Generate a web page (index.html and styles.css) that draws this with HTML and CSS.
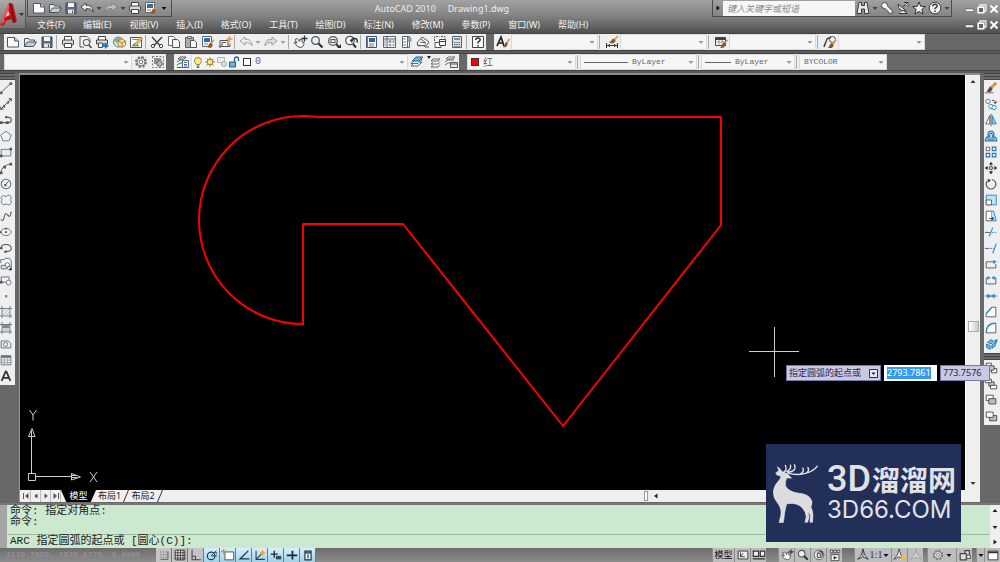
FILE: index.html
```html
<!DOCTYPE html>
<html lang="zh-CN">
<head>
<meta charset="utf-8">
<title>AutoCAD 2010 Drawing1.dwg</title>
<link rel="stylesheet" href="styles.css">
</head>
<body>
<svg class="sprite" aria-hidden="true">
  <symbol id="new" viewBox="0 0 16 16"><path d="M2.5 3.500h7l4 3.500v6h-11z" fill="#fbfbfb" stroke="#4c5664"/><path d="M9.500 3.500v3.500h4" fill="#c9d0d8" stroke="#4c5664"/></symbol>
  <symbol id="open" viewBox="0 0 16 16"><path d="M2.500 12.500v-8h4l1 1.500h5v2" fill="#e8ebee" stroke="#4c5664"/><path d="M2.500 12.500l3-4.500h9l-3 4.500z" fill="#c3ccd6" stroke="#4c5664"/></symbol>
  <symbol id="save" viewBox="0 0 16 16"><path d="M3 3h10v10.500h-10z" fill="#5c6a7e" stroke="#3f4a5a"/><path d="M5 3h6v4h-6z" fill="#f4f6f8"/><path d="M5 9.500h6v4h-6z" fill="#dfe4ea"/><path d="M9 10.500h1v2.500h-1z" fill="#3f4a5a"/></symbol>
  <symbol id="print" viewBox="0 0 16 16"><path d="M4.500 6v-3.500h7v3.500" fill="#fff" stroke="#444"/><rect x="2.500" y="6" width="11" height="5" rx="1" fill="#d6dadf" stroke="#444"/><path d="M4.500 9.500h7v4h-7z" fill="#fff" stroke="#444"/></symbol>
  <symbol id="preview" viewBox="0 0 16 16"><path d="M3 2.500h7l3 3v3M3 2.500v10.500h4" fill="#fff" stroke="#555"/><circle cx="9.500" cy="8.500" r="3.200" fill="#e8f1f8" stroke="#444"/><path d="M11.800 11l2.700 3" stroke="#444" stroke-width="1.600"/></symbol>
  <symbol id="publish" viewBox="0 0 16 16"><path d="M4.500 6v-3.500h7v3.500" fill="#fff" stroke="#444"/><path d="M2.500 6h11v4h-11z" fill="#d6dadf" stroke="#444"/><path d="M4.500 9h4v4.500h-4z" fill="#fff" stroke="#444"/><path d="M8 10.500h3v-2l4 3.300-4 3.200v-2h-3z" fill="#1976c0"/></symbol>
  <symbol id="dwf" viewBox="0 0 16 16"><circle cx="7.500" cy="8" r="5" fill="#dcece6" stroke="#5d7a78"/><path d="M3 6l4-3 3 1-2 3-3 2z" fill="#7db395"/><path d="M7 7l4-2 3.500 2v4l-3.500 2.500-4-2z" fill="#f6dda1" stroke="#b18738"/><path d="M7 7l4 2 3.500-2M11 9v4" fill="none" stroke="#b18738"/></symbol>
  <symbol id="markup" viewBox="0 0 16 16"><path d="M2.500 3.500h11v10h-11z" fill="#fff" stroke="#555"/><path d="M4 5.500h8M4 12l3-3 2 1 2 2z" fill="#70a783" stroke="#70a783"/><path d="M6 11l6.500-8 2 1.500-6.500 7.500z" fill="#f5c154" stroke="#99712a" stroke-width=".7"/></symbol>
  <symbol id="cut" viewBox="0 0 16 16"><path d="M3 3l8 8.500M13 3l-8 8.500" stroke="#444" stroke-width="1.400"/><circle cx="4" cy="12" r="1.700" fill="none" stroke="#444"/><circle cx="12" cy="12" r="1.700" fill="none" stroke="#444"/></symbol>
  <symbol id="copydoc" viewBox="0 0 16 16"><path d="M2.500 2.500h5l2 2v7h-7z" fill="#fff" stroke="#666"/><path d="M6.500 5.500h5l2 2v6h-7z" fill="#f4f6f8" stroke="#555"/></symbol>
  <symbol id="paste" viewBox="0 0 16 16"><path d="M2.500 3.500h8v10h-8z" fill="#a7adb5" stroke="#666"/><path d="M4.500 2.500h4v2h-4z" fill="#ddd" stroke="#666"/><path d="M7.500 6.500h4l2 2v5h-6z" fill="#fff" stroke="#555"/></symbol>
  <symbol id="match" viewBox="0 0 16 16"><path d="M2.500 2.500h9v10h-9z" fill="#fff" stroke="#52647c"/><path d="M4 4h6v4h-6z" fill="#366b9f"/><path d="M4 10h4" stroke="#777"/><path d="M14 6l-4 4" stroke="#c59a5c" stroke-width="1.600"/><path d="M10.500 8.500l2.500 2.500-2 3q-2 0-4-1z" fill="#9a5b29"/></symbol>
  <symbol id="blockedit" viewBox="0 0 16 16"><path d="M3 6.500h8v6h-8zM5 12.500v-4h4" fill="#f5f5f5" stroke="#555"/><circle cx="3" cy="12.500" r="1.300" fill="#777"/><path d="M12.500 2v6M9.500 5h6" stroke="#f29a24" stroke-width="1.500"/><path d="M8 12.500h5v-3" fill="none" stroke="#555"/></symbol>
  <symbol id="undo" viewBox="0 0 16 16"><path d="M2 7l5-4v2.500c4-.5 7 1 7 6.500-1.500-3-3-3.500-7-3.300v2.500z" fill="#eee" stroke="currentColor"/></symbol>
  <symbol id="redo" viewBox="0 0 16 16"><path d="M14 7l-5-4v2.500c-4-.5-7 1-7 6.500 1.500-3 3-3.500 7-3.300v2.500z" fill="#ddd" stroke="currentColor"/></symbol>
  <symbol id="pan" viewBox="0 0 16 16"><path d="M2 8l3 1-2-3.500 2-1 2.500 3L8 5l2 .5V8l2 .5q0 5-4 5Q5 13.500 2 8z" fill="#f6f6f6" stroke="#555"/><path d="M12.500 1.500v6M9.500 4.500h6" stroke="#333" stroke-width="1.300"/></symbol>
  <symbol id="zoom" viewBox="0 0 16 16"><circle cx="6.500" cy="6.500" r="3.800" fill="#eaf1f6" stroke="#4c5560" stroke-width="1.300"/><path d="M9.500 9.500l4 4" stroke="#333" stroke-width="2.300"/></symbol>
  <symbol id="zoomwin" viewBox="0 0 16 16"><circle cx="7" cy="7" r="4.300" fill="#eaf1f6" stroke="#4c5560" stroke-width="1.300"/><rect x="5" y="5.500" width="4" height="3" fill="none" stroke="#555"/><path d="M10 10l3 3" stroke="#333" stroke-width="2"/><path d="M11 14h4v-4z" fill="#333"/></symbol>
  <symbol id="zoomprev" viewBox="0 0 16 16"><circle cx="7" cy="6.500" r="4.200" fill="#fff" stroke="#4c5560" stroke-width="1.300"/><path d="M8 7q1-3 4-2.500t2 4" stroke="#333" stroke-width="1.500" fill="none"/><path d="M6.500 6l4-1-1.500 4z" fill="#333"/><path d="M10 10l3 3.500" stroke="#333" stroke-width="2"/></symbol>
  <symbol id="props" viewBox="0 0 16 16"><path d="M2.500 2.500h10v11h-10z" fill="#f9fbfd" stroke="#425672"/><path d="M5 4h6v4h-6z" fill="#30669d"/><path d="M5 10h5M5 12h5M3.500 3v10" stroke="#6d7d92"/></symbol>
  <symbol id="dcenter" viewBox="0 0 16 16"><path d="M2.500 2.500h12v11h-12zM6 2.500v11M2.500 5h12" fill="#f4f5f7" stroke="#5b6672"/><path d="M8 6.500h2v2h-2zM12 6.500h1v2h-1zM8 10.500h2v1h-2zM12 10.500h1v1h-1zM3 7h2M3 9h2M3 11h2" fill="#8fa0b3" stroke="#8fa0b3"/></symbol>
  <symbol id="toolpal" viewBox="0 0 16 16"><path d="M4.500 2.500h7v11h-7zM9.500 2.500v11" fill="#fff" stroke="#5b6672"/><path d="M10 4h3v3h-3zM5 5h3M5 8h3M5 11h3" fill="#aeb6c0" stroke="#7b8591"/></symbol>
  <symbol id="sheets" viewBox="0 0 16 16"><path d="M2 9l5-6 7 5-2 3-9 1z" fill="#fff" stroke="#555"/><path d="M2 10c3 3 6 0 8 3h4M5 8l6 1M6 5l5 4" fill="none" stroke="#555"/></symbol>
  <symbol id="msm" viewBox="0 0 16 16"><path d="M2.500 7v-4.500h5M9 2.500h4v5" fill="none" stroke="#555" stroke-dasharray="2 1"/><path d="M3 8.500h6v5h-6z" fill="#fff" stroke="#555"/><path d="M7.500 5.500h6v6h-6zM7.500 7.500h6" fill="#f4f4f4" stroke="#444"/></symbol>
  <symbol id="calc" viewBox="0 0 16 16"><path d="M3.500 2.500h9v11h-9z" fill="#dfe3e8" stroke="#56606c"/><path d="M5 4h6v2h-6z" fill="#7891a9"/><path d="M5 8.500h6M5 10.500h6M5 12.300h6" stroke="#56606c" stroke-dasharray="1.500 .8"/></symbol>
  <symbol id="help" viewBox="0 0 16 16"><path d="M2.500 2.500h11v11h-11z" fill="#fafafa" stroke="#444"/><path d="M5.800 6q0-2 2.200-2t2.200 1.800q0 1.200-2.200 2.500v1.200M8 11v1.500" fill="none" stroke="#333" stroke-width="1.500"/></symbol>
  <symbol id="tstyle" viewBox="0 0 16 16"><path d="M2 12l4-9 3 9M3.500 9h4" fill="none" stroke="#222" stroke-width="1.700"/><path d="M14.500 5l-3 4" stroke="#c99a59" stroke-width="1.600"/><path d="M11 8l2 2-2 3-3 .5z" fill="#8d5528"/></symbol>
  <symbol id="dstyle" viewBox="0 0 16 16"><path d="M2.500 9v5M13.500 9v5M3 11.500h10" fill="none" stroke="#333"/><path d="M3 11.500l3-1.500v3zM13 11.500l-3-1.500v3z" fill="#333"/><path d="M14 2l-4 4" stroke="#c99a59" stroke-width="1.700"/><path d="M9 4.500l3 2.500-3 2.500-4-.5z" fill="#8d5528"/></symbol>
  <symbol id="tbstyle" viewBox="0 0 16 16"><path d="M2.500 3.500h10v8h-10z" fill="#fff" stroke="#444"/><path d="M2.500 5h10" stroke="#444" stroke-width="2"/><path d="M2.500 8h10M6 6v5.500M9 6v5.500" stroke="#999"/><path d="M14.500 6l-3 3" stroke="#c99a59" stroke-width="1.600"/><path d="M11 8l2 2-2 3.500-4 .5z" fill="#8d5528"/></symbol>
  <symbol id="mlstyle" viewBox="0 0 16 16"><path d="M2 13l3-8 4-2M2 13l1-3.500" fill="none" stroke="#444" stroke-width="1.400"/><circle cx="10.500" cy="5.500" r="3" fill="none" stroke="#555"/><path d="M14 6l-4 5" stroke="#c99a59" stroke-width="1.600"/><path d="M9 9l3 2-2 3H6z" fill="#8d5528"/></symbol>
  <symbol id="gear" viewBox="0 0 16 16"><circle cx="8" cy="8" r="5" fill="none" stroke="#777" stroke-width="2" stroke-dasharray="2.300 1.600"/><circle cx="8" cy="8" r="4" fill="#e7e7e7" stroke="#777"/><circle cx="8" cy="8" r="1.700" fill="#fff" stroke="#777"/></symbol>
  <symbol id="wsave" viewBox="0 0 16 16"><path d="M2.500 2.500h11v11h-11z" fill="none" stroke="#777" stroke-dasharray="2 1.500"/><path d="M4 4h7v6h-7z" fill="#8a919a"/><circle cx="9.500" cy="9.500" r="2.800" fill="#aeb6bf" stroke="#5c6674"/></symbol>
  <symbol id="layers" viewBox="0 0 16 16"><path d="M3 5l2-2h6l-2 2zM2 8l3-2h3M2 11l3-2h2M2 13.500h6" fill="#fff" stroke="#555"/><path d="M7.500 6.500h6v7h-6z" fill="#fff" stroke="#486a91"/><path d="M9 8.500h3M9 10.500h3M9 12h3" stroke="#486a91"/></symbol>
  <symbol id="bulb" viewBox="0 0 12 16"><path d="M4.500 10.500q-2-2-2-4 0-3 3.500-3t3.500 3q0 2-2 4z" fill="#ffe884" stroke="#978439"/><path d="M4.500 12h3M4.800 13.500h2.400" stroke="#555"/></symbol>
  <symbol id="sun" viewBox="0 0 12 16"><path d="M6 3v10M1 8h10M2.500 4.500l7 7M9.500 4.500l-7 7" stroke="#9b8030"/><circle cx="6" cy="8" r="2.800" fill="#ffe788" stroke="#9b8030"/></symbol>
  <symbol id="vpfreeze" viewBox="0 0 12 16"><path d="M1.500 3.500h7v5h-7z" fill="#eee" stroke="#b5b5b5"/><circle cx="8" cy="10" r="2.500" fill="#e2e2e2" stroke="#aaa"/></symbol>
  <symbol id="unlock" viewBox="0 0 12 16"><path d="M6.500 8V5q0-2 2-2t2 2v2" fill="none" stroke="#2c6183" stroke-width="1.300"/><path d="M1.500 8h6v5h-6z" fill="#68b6df" stroke="#205f86"/></symbol>
  <symbol id="mklayer" viewBox="0 0 16 16"><path d="M2 12l4-4h7l-4 4z" fill="#fff" stroke="#54616d"/><path d="M2 9.500l4-4h7l-4 4z" fill="#dff0fa" stroke="#47779b"/><path d="M3 7l4-4h7l-4 4z" fill="#6cb3df" stroke="#2f688f"/></symbol>
  <symbol id="lprev" viewBox="0 0 16 16"><path d="M5 7l2-2h7l-2 2zM5 10l2-1.500M14 7.500l-2 2.500H5M5 13l2-1.500M14 10.500l-2 2.500H5" fill="#fff" stroke="#666"/><path d="M1 2l4 0-2 3z" fill="#222"/></symbol>
  <symbol id="lstate" viewBox="0 0 16 16"><path d="M3 5l2-2h7l-2 2zM2 8l3-2h6M2 11l3-2h2" fill="#fff" stroke="#666"/><path d="M7.500 8.500h7v5h-7z" fill="#e9edf1" stroke="#555"/><path d="M7.500 10h7" stroke="#555"/></symbol>

  <symbol id="line" viewBox="0 0 16 16"><path d="M2.500 13L13 3" stroke="#555"/><path d="M1 12h3v3H1zM12 1.500h3v3h-3z" fill="#5e6266"/></symbol>
  <symbol id="xline" viewBox="0 0 16 16"><path d="M2 14L14 2M11 2h3v3M2 11v3h3" fill="none" stroke="#333"/><path d="M4.500 9.500h2.500v2.500H4.500zM9 5h2.500v2.500H9z" fill="#555"/></symbol>
  <symbol id="pline" viewBox="0 0 16 16"><path d="M3 11h8q3 0 3-3t-3-3H8" fill="none" stroke="#596069" stroke-width="1.300"/><path d="M1 9.500h3v3H1zM8 9.500h3v3H8zM7 3.500h2.500V6H7z" fill="#555"/></symbol>
  <symbol id="polygon" viewBox="0 0 16 16"><path d="M8 2.500l6 4.500-2.500 6.500h-7L2 7z" fill="#eef2f6" stroke="#65717f"/></symbol>
  <symbol id="rect" viewBox="0 0 16 16"><path d="M2.500 5h11v7.500h-11z" fill="#e9eef3" stroke="#65717f"/><path d="M1 11h3v3H1zM12 3h3v3h-3z" fill="#555"/></symbol>
  <symbol id="arc" viewBox="0 0 16 16"><path d="M2.500 13q0-8 11-9.500" fill="none" stroke="#555"/><path d="M1 12h3v3H1zM12 2h3v3h-3zM5 5.500h3v3H5z" fill="#555"/></symbol>
  <symbol id="circle" viewBox="0 0 16 16"><circle cx="8" cy="8" r="5.500" fill="#eef2f6" stroke="#65717f" stroke-width="1.200"/><path d="M7 9l4-4" stroke="#444"/><path d="M6 8h2.500v2.500H6z" fill="#555"/></symbol>
  <symbol id="revcloud" viewBox="0 0 16 16"><path d="M8 4q4-3 5.500 0t-1 4q3 1 1 4t-5 .5Q5 15 3 12t1-4Q1 6 3 4t5 0z" fill="#eef2f6" stroke="#65717f"/></symbol>
  <symbol id="spline" viewBox="0 0 16 16"><path d="M2 12q3 3 4-3t4-2 4-4" fill="none" stroke="#555" stroke-width="1.200"/></symbol>
  <symbol id="ellipse" viewBox="0 0 16 16"><ellipse cx="8" cy="8" rx="6" ry="4" fill="#eef2f6" stroke="#65717f"/><path d="M7 7h2v2H7zM7 3h2v2H7zM1 7h2v2H1z" fill="#555"/></symbol>
  <symbol id="earc" viewBox="0 0 16 16"><path d="M2.500 8q0-4 5.500-4t6 4-6 4" fill="none" stroke="#555" stroke-width="1.200"/><path d="M1 7h3v2.500H1zM6 11h3v2.500H6z" fill="#555"/></symbol>
  <symbol id="insert" viewBox="0 0 16 16"><path d="M2 7V3h4l1-1.500h5l2 3V11H8" fill="#f2f4f6" stroke="#596675"/><path d="M2.500 9.500h7v4h-7z" fill="#dce2e9" stroke="#596675"/><circle cx="9.500" cy="9" r="2.500" fill="#fff" stroke="#596675"/><path d="M14.500 15v-4l-4 4z" fill="#222"/></symbol>
  <symbol id="block" viewBox="0 0 16 16"><path d="M2.500 4.500h9v6h-9z" fill="#eef2f6" stroke="#596675"/><circle cx="11" cy="11" r="2.700" fill="#fff" stroke="#596675"/><path d="M1 9h3v3H1z" fill="#555"/></symbol>
  <symbol id="point" viewBox="0 0 16 16"><path d="M7 7h2.500v2.500H7z" fill="#777"/></symbol>
  <symbol id="hatch" viewBox="0 0 16 16"><path d="M3.500 1v14M12.500 1v14M1 4h14M1 12.500h14" stroke="#65717f"/><path d="M4 8l4-4M4 12l8-8M8 12l4-4" stroke="#a6adb5"/></symbol>
  <symbol id="gradient" viewBox="0 0 16 16"><path d="M4 4h8v4H4z" fill="#7f8b97"/><path d="M4 8h8v4H4z" fill="#cbd1d7"/><path d="M3.500 1v14M12.500 1v14M1 4h14M1 12.500h14" stroke="#65717f"/></symbol>
  <symbol id="region" viewBox="0 0 16 16"><path d="M2.500 12.500v-8h8l3 3v5z" fill="#e9edf1" stroke="#596675"/><circle cx="7.500" cy="8.500" r="2.300" fill="#fff" stroke="#596675"/></symbol>
  <symbol id="table" viewBox="0 0 16 16"><path d="M2.500 3h11v10.500h-11z" fill="#fff" stroke="#596675"/><path d="M2.500 4.500h11" stroke="#596675" stroke-width="2"/><path d="M2.500 8h11M2.500 11h11M6 4v9M10 4v9" stroke="#8b939c"/></symbol>
  <symbol id="mtext" viewBox="0 0 16 16"><path d="M3 13.500L7.500 3h1L13 13.500M5 10h6" fill="none" stroke="#333" stroke-width="2"/></symbol>

  <symbol id="erase" viewBox="0 0 16 16"><path d="M14 2L8 8" stroke="#c29a60" stroke-width="3.500"/><path d="M7 6l3 3-3 4-4-1z" fill="#5f4a3c"/><path d="M1 13.500h10" stroke="#666"/></symbol>
  <symbol id="copy" viewBox="0 0 16 16"><circle cx="4.500" cy="5" r="2.500" fill="#fff" stroke="#5b6875"/><circle cx="8" cy="11" r="2.500" fill="#fff" stroke="#2585c6"/><circle cx="11.500" cy="12" r="2.500" fill="#e4f4fd" stroke="#2585c6"/><path d="M9 4q4-1 4 3M11 6l2 1.500L14.500 5" fill="none" stroke="#333"/></symbol>
  <symbol id="mirror" viewBox="0 0 16 16"><path d="M6.500 3v9.500H2z" fill="#fff" stroke="#56616c"/><path d="M9.500 3v9.500H14z" fill="#9bd2f3" stroke="#2479b6"/><path d="M8 1v14" stroke="#444"/></symbol>
  <symbol id="offset" viewBox="0 0 16 16"><path d="M1.500 13.500q0-4.500 3.500-4.500-1.500-6.500 3-6.500t3 6.500q3.500 0 3.500 4.500z" fill="#a9d8f4" stroke="#2579b2" stroke-width="1.400"/><path d="M4 11.500h8M6.500 10q-1.500-5 1.500-5t1.500 5" fill="none" stroke="#365a77"/></symbol>
  <symbol id="array" viewBox="0 0 16 16"><path d="M2.500 2.500h4v4h-4z" fill="#fff" stroke="#555"/><path d="M9.500 2.500h4v4h-4zM2.500 9.500h4v4h-4zM9.500 9.500h4v4h-4z" fill="#e4f4fd" stroke="#2479b6" stroke-width="1.300"/></symbol>
  <symbol id="move" viewBox="0 0 16 16"><path d="M8 2v3M8 11v3M2 8h3M11 8h3" stroke="#333" stroke-width="1.300"/><path d="M8 1l2.500 3h-5zM8 15l2.500-3h-5zM1 8l3-2.500v5zM15 8l-3-2.500v5z" fill="#333"/><path d="M6.500 6.500h3v3h-3z" fill="#fff" stroke="#333"/></symbol>
  <symbol id="rotate" viewBox="0 0 16 16"><path d="M4 4.500a5.500 5.500 0 1 0 5-1.700" fill="none" stroke="#555" stroke-width="1.300"/><path d="M4 2l4 1.500-3 3z" fill="#444"/></symbol>
  <symbol id="scale" viewBox="0 0 16 16"><path d="M2.500 2.500h11.500v11H2.500z" fill="#c0e4f9" stroke="#277fb9"/><path d="M2.500 8h6v5.500h-6z" fill="#fff" stroke="#555"/></symbol>
  <symbol id="stretch" viewBox="0 0 16 16"><path d="M2.500 2.500H9v11H2.500z" fill="#fff" stroke="#555"/><path d="M9 2.500h2l3 11H9" fill="#c0e4f9" stroke="#277fb9"/><path d="M6 11h5M9 9l2 2-2 2" stroke="#222" fill="none"/></symbol>
  <symbol id="trim" viewBox="0 0 16 16"><path d="M1 8.500h6" stroke="#555"/><path d="M9 8.500h6" stroke="#2789ca" stroke-dasharray="2 1"/><path d="M6 13L10 3" stroke="#2789ca" stroke-width="1.300"/></symbol>
  <symbol id="extend" viewBox="0 0 16 16"><path d="M1 8.500h5" stroke="#555"/><path d="M7 8.500h4" stroke="#2789ca" stroke-dasharray="2 1"/><path d="M10 14l4-11" stroke="#2789ca" stroke-width="1.300"/></symbol>
  <symbol id="breakpt" viewBox="0 0 16 16"><path d="M13.500 8v4.500h-11v-7h8" fill="none" stroke="#555"/><path d="M10.500 3l4 2.500-4 2.500z" fill="#2789ca"/></symbol>
  <symbol id="break" viewBox="0 0 16 16"><path d="M4 5.500H2.500v7h11v-7H12" fill="none" stroke="#555"/><path d="M4 3l3.500 2.500L4 8zM12 3L8.500 5.500 12 8z" fill="#2789ca"/></symbol>
  <symbol id="join" viewBox="0 0 16 16"><path d="M1 8h14" stroke="#555"/><path d="M4 5l4 3-4 3zM12 5L8 8l4 3z" fill="#2789ca"/></symbol>
  <symbol id="chamfer" viewBox="0 0 16 16"><path d="M13.500 2.500v11h-11V10L9 2.500z" fill="#fff" stroke="#555"/><path d="M2.500 10L9 2.500" stroke="#2789ca" stroke-width="1.400"/></symbol>
  <symbol id="fillet" viewBox="0 0 16 16"><path d="M13.500 2.500v11h-11q0-10 11-11z" fill="#fff" stroke="#555"/><path d="M2.500 13q0-10.500 10.500-10.500" fill="none" stroke="#2789ca" stroke-width="1.300"/></symbol>
  <symbol id="explode" viewBox="0 0 16 16"><path d="M4 6l4-3 3 2-3 3zM3 8l4 2v4l-4-2zM9 9l4-3v4l-4 3zM12 4l3-1-1 4z" fill="#6fbceb" stroke="#1c6da8"/></symbol>
  <symbol id="front" viewBox="0 0 16 16"><path d="M2.500 2.500h6v5h-6zM8.500 8.500h6v5h-6z" fill="#fff" stroke="#444"/><path d="M5.500 5.500h6v5h-6z" fill="#bfc7cf" stroke="#444"/></symbol>
  <symbol id="back" viewBox="0 0 16 16"><path d="M5.500 5.500h6v5h-6z" fill="#bfc7cf" stroke="#444"/><path d="M1.500 2.500h7v4h-7zM7.500 9.500h7v4h-7z" fill="#fff" stroke="#444"/></symbol>
  <symbol id="above" viewBox="0 0 16 16"><path d="M2.500 2.500h8v6h-8z" fill="#fff" stroke="#444"/><path d="M5.500 6.500h8v6h-8z" fill="#b5bdc5" stroke="#444"/></symbol>
  <symbol id="under" viewBox="0 0 16 16"><path d="M6.500 7.500h8v6h-8z" fill="#b5bdc5" stroke="#444"/><path d="M2.500 3.500h8v6h-8z" fill="#fff" stroke="#444"/></symbol>

  <symbol id="binoc" viewBox="0 0 16 16"><path d="M4 2.500h2.500v3h3v-3H12L14 13.500H9.500V9h-3v4.500H2z" fill="#e7eaee" stroke="#353c46"/></symbol>
  <symbol id="key" viewBox="0 0 16 16"><path d="M7 7l6 6" stroke="#444" stroke-width="4"/><circle cx="5.500" cy="5.500" r="3" fill="#f4f4f4" stroke="#444"/><path d="M6 6l6.500 6.500" stroke="#f4f4f4" stroke-width="2.600"/></symbol>
  <symbol id="dish" viewBox="0 0 16 16"><path d="M3 4q0 7 8 7zM4 13.500h8L9 10.500M8 7l4-4M9 2.500h4v4" fill="#f4f4f4" stroke="#333"/></symbol>
  <symbol id="star" viewBox="0 0 16 16"><path d="M8 2l1.700 4.300 4.600.3-3.500 2.900 1.200 4.500-4-2.500L4 14l1.200-4.500L1.700 6.600l4.600-.3z" fill="#eee" stroke="#333"/></symbol>
  <symbol id="qmark" viewBox="0 0 16 16"><circle cx="8" cy="8" r="5.800" fill="#eee" stroke="#444"/><path d="M5.800 6.300q0-2 2.200-2t2.200 1.800q0 1.200-2.200 2.200v1M8 10.500v1.500" fill="none" stroke="#333" stroke-width="1.400"/></symbol>
  <symbol id="min" viewBox="0 0 12 12"><path d="M1.500 6h8v2.500h-8z" fill="#fff" stroke="#444" stroke-width=".5"/></symbol>
  <symbol id="restore" viewBox="0 0 12 12"><path d="M4 2h6v6H4z" fill="none" stroke="#eee" stroke-width="1.300"/><path d="M2.200 4.200h5.600v5.600H2.200z" fill="#666" stroke="#fff" stroke-width="1.500"/></symbol>
  <symbol id="close" viewBox="0 0 12 12"><path d="M2.500 2.500l7 7M9.500 2.500l-7 7" stroke="#fff" stroke-width="2"/></symbol>
  <symbol id="down" viewBox="0 0 8 8"><path d="M1.500 3h5L4 6z" fill="currentColor"/></symbol>
  <symbol id="up" viewBox="0 0 8 8"><path d="M1.500 5h5L4 2z" fill="currentColor"/></symbol>
  <symbol id="left" viewBox="0 0 8 8"><path d="M5.500 1.500v5L2 4z" fill="currentColor"/></symbol>
  <symbol id="right" viewBox="0 0 8 8"><path d="M2.500 1.500v5L6 4z" fill="currentColor"/></symbol>
  <symbol id="first" viewBox="0 0 8 8"><path d="M6.500 1v6L3 4z" fill="currentColor"/><path d="M1.500 1v6" stroke="currentColor"/></symbol>
  <symbol id="last" viewBox="0 0 8 8"><path d="M1.500 1v6L5 4z" fill="currentColor"/><path d="M6.500 1v6" stroke="currentColor"/></symbol>

  <symbol id="snap" viewBox="0 0 16 16"><path d="M4 4.500h8M4 7.500h8M4 10.500h8" stroke="#444" stroke-dasharray="1 2"/><path d="M12.500 4v9H4" fill="none" stroke="#555"/></symbol>
  <symbol id="grid" viewBox="0 0 16 16"><path d="M2.500 2.500h11v11h-11zM5.500 2v12M8.500 2v12M11.500 2v12M2 5.500h12M2 8.500h12M2 11.500h12" fill="#eee" stroke="#333"/></symbol>
  <symbol id="ortho" viewBox="0 0 16 16"><path d="M3.500 2v11.500H14M3.500 9.500h4v4" fill="none" stroke="#444" stroke-width="1.200"/></symbol>
  <symbol id="polar" viewBox="0 0 16 16"><circle cx="7" cy="9" r="4.300" fill="none" stroke="#1f3c4b" stroke-width="1.300"/><path d="M7 9l6-6M7 9h7M11 5l2 0v2" fill="none" stroke="#1f3c4b"/></symbol>
  <symbol id="osnap" viewBox="0 0 16 16"><path d="M4.500 4.500h10v9h-10z" fill="#fff" stroke="#444"/><path d="M3 1v6M0 4h6" stroke="#e48a20" stroke-width="1.500"/></symbol>
  <symbol id="otrack" viewBox="0 0 16 16"><path d="M13 3L3.500 12.500H14" fill="none" stroke="#233b48" stroke-width="1.500"/></symbol>
  <symbol id="ducs" viewBox="0 0 16 16"><path d="M3.500 3v10h10M3.500 13l6-6" fill="none" stroke="#234357" stroke-width="1.200"/><path d="M11 1l1.200 3.300L15 5.500l-2.800 1.200L11 10 9.800 6.700 7 5.500l2.800-1.200z" fill="#f5a437"/></symbol>
  <symbol id="dyn" viewBox="0 0 16 16"><path d="M6 3v8M2 7h8" stroke="#222" stroke-width="1.500"/><path d="M8 9h6v4H8z" fill="#334c59"/></symbol>
  <symbol id="lwt" viewBox="0 0 16 16"><path d="M2 8.500h12M8.500 3v10" stroke="#18252d" stroke-width="2"/></symbol>
  <symbol id="qp" viewBox="0 0 16 16"><path d="M4.500 3.500h7v10h-7zM4.500 5.500h7" fill="#eff9ff" stroke="#1c2d38" stroke-width="1.300"/><path d="M7 7h2v5H7z" fill="#617c8d"/></symbol>
  <symbol id="qvlay" viewBox="0 0 16 16"><path d="M2.500 3.500h11v9h-11z" fill="#eee" stroke="#333"/><path d="M5 5v5h5M5 10l3-4" fill="none" stroke="#333"/></symbol>
  <symbol id="qvdraw" viewBox="0 0 16 16"><path d="M1.500 3.500h6v6h-6zM9.500 3.500h5v6h-5zM1 12.500h14" fill="#eee" stroke="#333" stroke-width="1.300"/></symbol>
  <symbol id="wheel" viewBox="0 0 16 16"><circle cx="8" cy="8" r="5.500" fill="#eee" stroke="#555"/><path d="M6 6l2-2h4v5l-2 2H6zM6 6h4v5M10 6l2-2" fill="#ccd" stroke="#444"/></symbol>
  <symbol id="motion" viewBox="0 0 16 16"><path d="M2.500 2.500h3v3h-3zM6.500 2.500h3v3h-3zM10.500 2.500h3v3h-3zM3.500 7.500h9v7h-9z" fill="#eee" stroke="#444"/><path d="M6.500 9v4l4-2z" fill="#333"/></symbol>
  <symbol id="anno" viewBox="0 0 16 16"><path d="M8 1l2 7 4 5-6-3-6 3 4-5z" fill="#eee" stroke="currentColor"/><path d="M8 2v8" stroke="currentColor"/></symbol>
  <symbol id="annostar" viewBox="0 0 16 16"><path d="M7 1l2 7 4 5-6-3-6 3 4-5z" fill="#eee" stroke="#444"/><circle cx="12" cy="11" r="2.500" fill="#f8bd52"/></symbol>
  <symbol id="tlock" viewBox="0 0 16 16"><path d="M2.500 6.500h7v7h-7zM8 6V3h5v5" fill="#ddd" stroke="#444" stroke-width="1.300"/><path d="M10 8h4v4h-4z" fill="#eee" stroke="#444"/></symbol>
  <symbol id="clean" viewBox="0 0 16 16"><path d="M2.500 3.500h11v10h-11z" fill="#fff" stroke="#333"/><path d="M2.500 5h11" stroke="#333" stroke-width="2"/></symbol>
</svg>

<header class="top">
  <button class="app" aria-label="应用程序菜单">
    <svg viewBox="0 0 26 29"><path d="M9 3l4 1 4 17-4 2-2-4-5 2-2 5-4-1z" fill="#d51820"/><path d="M9 3l3 1 4 18-3 1z" fill="#8a0e13"/><path d="M8 10l1.500 5-4 2z" fill="#f3d9d9"/><path d="M9 3L2 20l-1 4 3-2 5-14z" fill="#f1565a"/><path d="M4 18l8-3 1 3-8 3z" fill="#b81118"/><path d="M19 13h5l-2.500 3z" fill="#333"/></svg>
  </button>
  <div class="heads">
    <div class="titlebar">
      <div class="qat">
        <button aria-label="新建"><svg><use href="#new"/></svg></button>
        <button aria-label="打开"><svg><use href="#open"/></svg></button>
        <button aria-label="保存"><svg><use href="#save"/></svg></button>
        <button class="light" aria-label="放弃"><svg><use href="#undo"/></svg></button>
        <button class="dd" aria-label="放弃列表"><svg><use href="#down"/></svg></button>
        <button class="dim" aria-label="重做"><svg><use href="#redo"/></svg></button>
        <button class="dd" aria-label="重做列表"><svg><use href="#down"/></svg></button>
        <button aria-label="打印"><svg><use href="#print"/></svg></button>
        <button aria-label="特性匹配"><svg><use href="#match"/></svg></button>
        <button class="dd strong" aria-label="自定义"><svg><use href="#down"/></svg></button>
      </div>
      <h1 class="title"><span>AutoCAD 2010</span><span>Drawing1.dwg</span></h1>
      <div class="info">
        <button class="dd strong" aria-label="展开"><svg><use href="#right"/></svg></button>
        <input type="text" aria-label="搜索" placeholder="键入关键字或短语">
        <button aria-label="查找"><svg><use href="#binoc"/></svg></button>
        <button class="dd" aria-label="查找选项"><svg><use href="#down"/></svg></button>
        <button aria-label="速博应用中心"><svg><use href="#key"/></svg></button>
        <button aria-label="通讯中心"><svg><use href="#dish"/></svg></button>
        <button aria-label="收藏夹"><svg><use href="#star"/></svg></button>
        <button aria-label="帮助"><svg><use href="#qmark"/></svg></button>
        <button class="dd" aria-label="帮助选项"><svg><use href="#down"/></svg></button>
      </div>
      <div class="win">
        <button aria-label="最小化"><svg><use href="#min"/></svg></button>
        <button aria-label="还原"><svg><use href="#restore"/></svg></button>
        <button aria-label="关闭"><svg><use href="#close"/></svg></button>
      </div>
    </div>
    <div class="menubar">
      <nav class="menu">
        <button>文件(F)</button><button>编辑(E)</button><button>视图(V)</button><button>插入(I)</button><button>格式(O)</button><button>工具(T)</button><button>绘图(D)</button><button>标注(N)</button><button>修改(M)</button><button>参数(P)</button><button>窗口(W)</button><button>帮助(H)</button>
      </nav>
      <div class="win">
        <button aria-label="最小化图形"><svg><use href="#min"/></svg></button>
        <button aria-label="还原图形"><svg><use href="#restore"/></svg></button>
        <button aria-label="关闭图形"><svg><use href="#close"/></svg></button>
      </div>
    </div>
  </div>
</header>

<div class="toolbars">
  <div class="row">
    <div class="bar">
      <button aria-label="新建"><svg><use href="#new"/></svg></button>
      <button aria-label="打开"><svg><use href="#open"/></svg></button>
      <button aria-label="保存"><svg><use href="#save"/></svg></button>
      <i class="sep"></i>
      <button aria-label="打印"><svg><use href="#print"/></svg></button>
      <button aria-label="打印预览"><svg><use href="#preview"/></svg></button>
      <button aria-label="发布"><svg><use href="#publish"/></svg></button>
      <button aria-label="三维DWF"><svg><use href="#dwf"/></svg></button>
      <button aria-label="标记"><svg><use href="#markup"/></svg></button>
      <i class="sep"></i>
      <button aria-label="剪切"><svg><use href="#cut"/></svg></button>
      <button aria-label="复制"><svg><use href="#copydoc"/></svg></button>
      <button aria-label="粘贴"><svg><use href="#paste"/></svg></button>
      <button aria-label="特性匹配"><svg><use href="#match"/></svg></button>
      <button aria-label="块编辑器"><svg><use href="#blockedit"/></svg></button>
      <i class="sep"></i>
      <button class="off" aria-label="放弃"><svg><use href="#undo"/></svg></button>
      <button class="dd off" aria-label="放弃列表"><svg><use href="#down"/></svg></button>
      <button class="off" aria-label="重做"><svg><use href="#redo"/></svg></button>
      <button class="dd off" aria-label="重做列表"><svg><use href="#down"/></svg></button>
      <i class="sep"></i>
      <button aria-label="平移"><svg><use href="#pan"/></svg></button>
      <button aria-label="缩放"><svg><use href="#zoom"/></svg></button>
      <button aria-label="窗口缩放"><svg><use href="#zoomwin"/></svg></button>
      <button aria-label="上一个"><svg><use href="#zoomprev"/></svg></button>
      <i class="sep"></i>
      <button aria-label="特性"><svg><use href="#props"/></svg></button>
      <button aria-label="设计中心"><svg><use href="#dcenter"/></svg></button>
      <button aria-label="工具选项板"><svg><use href="#toolpal"/></svg></button>
      <button aria-label="图纸集"><svg><use href="#sheets"/></svg></button>
      <button aria-label="标记集"><svg><use href="#msm"/></svg></button>
      <button aria-label="计算器"><svg><use href="#calc"/></svg></button>
      <i class="sep"></i>
      <button aria-label="帮助"><svg><use href="#help"/></svg></button>
    </div>
    <div class="bar styles">
      <button aria-label="文字样式"><svg><use href="#tstyle"/></svg></button>
      <div class="combo w-style"><select aria-label="文字样式"><option></option></select><svg class="arrow"><use href="#down"/></svg></div>
      <i class="sep"></i>
      <button aria-label="标注样式"><svg><use href="#dstyle"/></svg></button>
      <div class="combo w-style"><select aria-label="标注样式"><option></option></select><svg class="arrow"><use href="#down"/></svg></div>
      <i class="sep"></i>
      <button aria-label="表格样式"><svg><use href="#tbstyle"/></svg></button>
      <div class="combo w-style"><select aria-label="表格样式"><option></option></select><svg class="arrow"><use href="#down"/></svg></div>
      <i class="sep"></i>
      <button aria-label="多重引线样式"><svg><use href="#mlstyle"/></svg></button>
      <div class="combo w-style"><select aria-label="多重引线样式"><option></option></select><svg class="arrow"><use href="#down"/></svg></div>
    </div>
  </div>
  <div class="row">
    <div class="bar">
      <div class="combo w-space"><select aria-label="工作空间"><option></option></select><svg class="arrow"><use href="#down"/></svg></div>
      <button aria-label="工作空间设置"><svg><use href="#gear"/></svg></button>
      <button aria-label="我的工作空间"><svg><use href="#wsave"/></svg></button>
    </div>
    <div class="bar">
      <button aria-label="图层特性"><svg><use href="#layers"/></svg></button>
      <div class="combo w-layer">
        <svg class="lay"><use href="#bulb"/></svg><svg class="lay"><use href="#sun"/></svg><svg class="lay"><use href="#vpfreeze"/></svg><svg class="lay"><use href="#unlock"/></svg><i class="swatch white"></i>
        <select aria-label="图层"><option>0</option></select><svg class="arrow"><use href="#down"/></svg>
      </div>
      <button aria-label="置为当前图层"><svg><use href="#mklayer"/></svg></button>
      <button aria-label="上一个图层"><svg><use href="#lprev"/></svg></button>
      <button aria-label="图层状态"><svg><use href="#lstate"/></svg></button>
    </div>
    <div class="bar">
      <div class="combo w-color"><i class="swatch red"></i><select aria-label="颜色"><option>红</option></select><svg class="arrow"><use href="#down"/></svg></div>
      <i class="sep"></i>
      <div class="combo w-ltype"><i class="sample long"></i><select aria-label="线型"><option>ByLayer</option></select><svg class="arrow"><use href="#down"/></svg></div>
      <i class="sep"></i>
      <div class="combo w-lweight"><i class="sample"></i><select aria-label="线宽"><option>ByLayer</option></select><svg class="arrow"><use href="#down"/></svg></div>
      <i class="sep"></i>
      <div class="combo w-plot"><select aria-label="打印样式"><option>BYCOLOR</option></select><svg class="arrow"><use href="#down"/></svg></div>
    </div>
  </div>
</div>

<main class="work">
  <aside class="side">
    <i class="grip"></i>
    <div class="stack">
      <button aria-label="直线"><svg><use href="#line"/></svg></button>
      <button aria-label="构造线"><svg><use href="#xline"/></svg></button>
      <button aria-label="多段线"><svg><use href="#pline"/></svg></button>
      <button aria-label="正多边形"><svg><use href="#polygon"/></svg></button>
      <button aria-label="矩形"><svg><use href="#rect"/></svg></button>
      <button aria-label="圆弧"><svg><use href="#arc"/></svg></button>
      <button aria-label="圆"><svg><use href="#circle"/></svg></button>
      <button aria-label="修订云线"><svg><use href="#revcloud"/></svg></button>
      <button aria-label="样条曲线"><svg><use href="#spline"/></svg></button>
      <button aria-label="椭圆"><svg><use href="#ellipse"/></svg></button>
      <button aria-label="椭圆弧"><svg><use href="#earc"/></svg></button>
      <button aria-label="插入块"><svg><use href="#insert"/></svg></button>
      <button aria-label="创建块"><svg><use href="#block"/></svg></button>
      <button aria-label="点"><svg><use href="#point"/></svg></button>
      <button aria-label="图案填充"><svg><use href="#hatch"/></svg></button>
      <button aria-label="渐变色"><svg><use href="#gradient"/></svg></button>
      <button aria-label="面域"><svg><use href="#region"/></svg></button>
      <button aria-label="表格"><svg><use href="#table"/></svg></button>
      <button aria-label="多行文字"><svg><use href="#mtext"/></svg></button>
    </div>
  </aside>

  <section class="doc">
    <div class="view">
      <svg class="canvas" viewBox="20 75 945 415" preserveAspectRatio="xMinYMin meet" role="img" aria-label="图形">
        <path d="M303 325V224H403L563 426L721 225V117H318Q310 116 303 116A104 104 0 0 0 303 324" fill="none" stroke="#fa0000" stroke-width="2" stroke-linejoin="round"/>
        <g stroke="#d0d0c4" fill="none">
          <path d="M749 351.500h50M774.500 327v50"/>
          <path d="M28.500 473.500h7v7h-7zM31.500 473v-36M36 476.500h35M28.500 436.500l3.500-8 3 8zM71.500 473.500l9 3.500-9 3zM31.500 431v5M72 475.500h5M72 477.500h5"/>
          <path d="M29.500 410l3.500 5 3.500-5M33 415v5.500M90 472l7 10M97 472l-7 10"/>
        </g>
      </svg>
      <div class="vscroll"><svg class="arrow"><use href="#up"/></svg><i class="thumb"></i><svg class="arrow"><use href="#down"/></svg></div>
    </div>
    <div class="tabs">
      <button class="nav" aria-label="首个"><svg><use href="#first"/></svg></button>
      <button class="nav" aria-label="向前"><svg><use href="#left"/></svg></button>
      <button class="nav" aria-label="向后"><svg><use href="#right"/></svg></button>
      <button class="nav" aria-label="末个"><svg><use href="#last"/></svg></button>
      <button class="tab on">模型</button>
      <button class="tab">布局1</button>
      <svg class="slash" viewBox="0 0 6 12"><path d="M.5 12L5.500 0" stroke="#333"/></svg>
      <button class="tab">布局2</button>
      <svg class="slash" viewBox="0 0 6 12"><path d="M.5 12L5.500 0" stroke="#333"/></svg>
      <div class="hscroll"><i class="split"></i><svg class="arrow"><use href="#left"/></svg></div>
    </div>
  </section>

  <aside class="side right">
    <i class="grip"></i>
    <div class="stack">
      <button aria-label="删除"><svg><use href="#erase"/></svg></button>
      <button aria-label="复制"><svg><use href="#copy"/></svg></button>
      <button aria-label="镜像"><svg><use href="#mirror"/></svg></button>
      <button aria-label="偏移"><svg><use href="#offset"/></svg></button>
      <button aria-label="阵列"><svg><use href="#array"/></svg></button>
      <button aria-label="移动"><svg><use href="#move"/></svg></button>
      <button aria-label="旋转"><svg><use href="#rotate"/></svg></button>
      <button aria-label="缩放"><svg><use href="#scale"/></svg></button>
      <button aria-label="拉伸"><svg><use href="#stretch"/></svg></button>
      <button aria-label="修剪"><svg><use href="#trim"/></svg></button>
      <button aria-label="延伸"><svg><use href="#extend"/></svg></button>
      <button aria-label="打断于点"><svg><use href="#breakpt"/></svg></button>
      <button aria-label="打断"><svg><use href="#break"/></svg></button>
      <button aria-label="合并"><svg><use href="#join"/></svg></button>
      <button aria-label="倒角"><svg><use href="#chamfer"/></svg></button>
      <button aria-label="圆角"><svg><use href="#fillet"/></svg></button>
      <button aria-label="分解"><svg><use href="#explode"/></svg></button>
    </div>
    <i class="grip"></i>
    <div class="stack">
      <button aria-label="前置"><svg><use href="#front"/></svg></button>
      <button aria-label="后置"><svg><use href="#back"/></svg></button>
      <button aria-label="置于对象之上"><svg><use href="#above"/></svg></button>
      <button aria-label="置于对象之下"><svg><use href="#under"/></svg></button>
    </div>
  </aside>

  <div class="dynamic">
    <div class="tip prompt"><span>指定圆弧的起点或</span><svg viewBox="0 0 9 9"><path d="M.5.500h8v8h-8z" fill="#e6e6f2" stroke="#333"/><path d="M2.500 3.500h4L4.500 6z" fill="#222"/></svg></div>
    <div class="tip field"><input class="sel" aria-label="X" value="2793.7861"></div>
    <div class="tip"><input aria-label="Y" value="773.7576"></div>
  </div>
</main>

<section class="command">
  <i class="handle"></i>
  <div class="log">
    <p>命令: 指定对角点:</p>
    <p>命令:</p>
    <div class="entry"><label for="cmd">ARC 指定圆弧的起点或 [圆心(C)]:</label><input id="cmd" type="text"></div>
  </div>
  <div class="cscroll"><svg><use href="#up"/></svg><svg><use href="#down"/></svg><svg><use href="#right"/></svg></div>
</section>

<footer class="status">
  <output class="coords">2170.7020, 1070.6770, 0.0000</output>
  <div class="toggles">
    <button aria-label="捕捉"><svg><use href="#snap"/></svg></button>
    <button aria-label="栅格"><svg><use href="#grid"/></svg></button>
    <button aria-label="正交"><svg><use href="#ortho"/></svg></button>
    <button class="on" aria-label="极轴"><svg><use href="#polar"/></svg></button>
    <button class="on" aria-label="对象捕捉"><svg><use href="#osnap"/></svg></button>
    <button class="on" aria-label="对象追踪"><svg><use href="#otrack"/></svg></button>
    <button class="on" aria-label="动态UCS"><svg><use href="#ducs"/></svg></button>
    <button class="on" aria-label="动态输入"><svg><use href="#dyn"/></svg></button>
    <button class="on" aria-label="线宽"><svg><use href="#lwt"/></svg></button>
    <button class="on" aria-label="快捷特性"><svg><use href="#qp"/></svg></button>
  </div>
  <div class="tray">
    <div class="group">
      <button class="wide">模型</button>
      <button aria-label="快速查看布局"><svg><use href="#qvlay"/></svg></button>
      <button aria-label="快速查看图形"><svg><use href="#qvdraw"/></svg></button>
    </div>
    <div class="group">
      <button aria-label="平移"><svg><use href="#pan"/></svg></button>
      <button aria-label="缩放"><svg><use href="#zoom"/></svg></button>
      <button aria-label="控制盘"><svg><use href="#wheel"/></svg></button>
      <button aria-label="运动"><svg><use href="#motion"/></svg></button>
    </div>
    <div class="group">
      <button class="scale"><svg><use href="#anno"/></svg>1:1<svg class="arrow"><use href="#down"/></svg></button>
      <button aria-label="注释可见性"><svg><use href="#annostar"/></svg></button>
      <button class="off" aria-label="自动缩放"><svg><use href="#anno"/></svg></button>
    </div>
    <div class="group tight">
      <button class="ws" aria-label="切换工作空间"><svg><use href="#gear"/></svg><svg class="arrow"><use href="#down"/></svg></button>
      <button aria-label="锁定"><svg><use href="#tlock"/></svg></button>
    </div>
    <div class="group tight">
      <button class="dd strong" aria-label="状态栏菜单"><svg><use href="#down"/></svg></button>
      <button aria-label="全屏显示"><svg><use href="#clean"/></svg></button>
    </div>
  </div>
</footer>

<div class="mark">
  <svg viewBox="36 64 140 184" aria-hidden="true">
    <g fill="none" stroke="#e4e4e8" stroke-width="4" stroke-linecap="round"><path d="M70 96Q82 86 76 74M80 92Q94 86 91 73M84 94Q110 92 103 72M82 96Q112 105 138 97Q160 91 171 76M118 101Q134 92 128 82M140 96Q148 88 143 80"/></g>
    <path d="M47 96Q53 94 56 88L52 78Q60 82 65 91L84 100L94 112L80 111Q74 122 77 136Q86 152 112 156Q146 158 154 178Q157 186 152 198Q158 210 158 222L157 243H149L150 222L142 206Q147 220 146 230L142 243H134L138 227Q137 212 128 203Q120 190 98 187L80 188Q76 200 74 214L70 244H57L62 224Q66 202 52 185Q39 170 40 150Q43 131 58 117Q64 110 60 104L51 103Z" fill="#dcdcde" stroke="#f3f3f6" stroke-width="1.500"/>
  </svg>
  <div class="brand">
    <div class="big"><span class="lat">3D</span><span>溜溜网</span></div>
    <div class="dom">3D66.COM</div>
  </div>
</div>
</body>
</html>
```

FILE: styles.css
```css
* { box-sizing: border-box; }
html, body { height: 100%; }
body {
  margin: 0;
  display: flex;
  flex-direction: column;
  position: relative;
  overflow: hidden;
  background: #686868;
  font: 9px/12px "Noto Sans", "Noto Sans CJK SC", sans-serif;
  color: #333;
}
.sprite { display: none; }
button, input, select {
  margin: 0; padding: 0; border: 0; border-radius: 0;
  background: none; color: inherit; font: inherit; outline: 0;
}
button { display: flex; align-items: center; justify-content: center; flex: none; }
svg { display: block; flex: none; }
i { display: block; flex: none; }
button svg { width: 16px; height: 16px; }
.dd svg, svg.arrow { width: 8px; height: 8px; }
.off { color: #a0a0a0; }

/* title and menus */
.top { display: flex; height: 33px; flex: none; background: linear-gradient(#a2a2a2, #858585 45%, #505050); }
.app { width: 26px; height: 29px; border-right: 1px solid #555; border-bottom: 1px solid #555; background: linear-gradient(#a9a9a9, #777); }
.app svg { width: 26px; height: 29px; }
.heads { flex: 1; display: flex; flex-direction: column; min-width: 0; }
.titlebar { display: flex; height: 17px; align-items: stretch; }
.qat, .info { display: flex; align-items: center; border: 1px solid #4c4c4c; border-top: 0; background: linear-gradient(#a0a0a0, #858585); }
.qat { width: 145px; margin-left: 1px; padding-left: 3px; }
.qat button, .info button { width: 16px; }
.qat .dd, .info .dd { width: 8px; color: #444; }
.qat .strong, .info .strong { color: #111; width: 10px; }
.light { color: #444; }
.dim { color: #777; opacity: .6; }
.title { flex: 1; margin: 0; display: flex; justify-content: center; align-items: center; gap: 12px; font-size: 9px; font-weight: 400; color: #eee; }
.info { width: 240px; }
.info input { flex: 1; min-width: 0; height: 15px; padding: 0 4px; background: #f6f6f6; font-style: italic; }
.info input::placeholder { color: #888; opacity: 1; }
.win { display: flex; align-items: center; gap: 1px; margin-left: 12px; width: 36px; }
.win button { width: 11px; }
.win svg { width: 12px; height: 12px; }
.menubar { display: flex; height: 16px; justify-content: space-between; align-items: center; }
.menu { display: flex; gap: 18px; padding-left: 11px; color: #f2f2f2; }

/* toolbars */
.toolbars { flex: none; display: flex; flex-direction: column; gap: 4px; padding: 1px 0 3px; background: #5a5a5a; }
.row { display: flex; gap: 8px; height: 16px; padding-left: 4px; background: #686868; box-shadow: 0 -1px #444, 0 1px #444; }
.bar { display: flex; align-items: center; background: #efefef; }
.bar button { width: 17px; height: 16px; }
.bar .dd { width: 8px; }
.sep { width: 3px; height: 14px; border-left: 1px solid #aaa; margin-left: 1px; }
.styles .sep { width: 4px; }
.combo { display: flex; align-items: center; height: 16px; background: #f6f6f6; border: 1px solid #d9d9d9; color: #666; }
.combo select { appearance: none; flex: 1; min-width: 0; height: 14px; font: 8px/14px "Liberation Mono", "Noto Sans CJK SC", monospace; padding: 0 4px; }
.combo .arrow { color: #999; margin-right: 1px; }
.w-style { width: 87px; }
.w-space { width: 128px; }
.w-layer { width: 217px; }
.w-color { width: 109px; }
.w-ltype { width: 117px; }
.w-lweight { width: 94px; }
.w-plot { width: 88px; }
.lay { width: 12px; height: 16px; }
.swatch { width: 8px; height: 8px; border: 1px solid #333; margin-left: 3px; }
.red { background: #f00; }
.white { background: #fff; }
.sample { width: 26px; height: 1px; margin-left: 3px; background: #666; }
.long { width: 44px; }
.w-color select { font-family: "Noto Sans CJK SC", sans-serif; font-size: 10px; }
.w-layer select { font-size: 10px; }

/* workspace */
.work { flex: 1; min-height: 0; display: flex; gap: 4px; position: relative; padding-bottom: 1px; }
.side { width: 15px; flex: none; overflow: hidden; }
.right { width: 16px; }
.grip { height: 7px; background: repeating-linear-gradient(#444 0 1px, #6a6a6a 1px 3px); }
.stack { background: #efefef; padding-bottom: 1px; }
.stack button { width: 14px; height: 16px; margin-left: -1px; }
.right .stack button { margin-left: 0; }
.stack svg { width: 14px; height: 14px; }
.doc { flex: 1; min-width: 0; display: flex; flex-direction: column; border-top: 2px solid #8d8d8d; border-left: 1px solid #999; }
.view { flex: 1; min-height: 0; display: flex; background: #000; }
.canvas { flex: 1; min-width: 0; height: 100%; }
.vscroll { flex: none; width: 15px; display: flex; flex-direction: column; align-items: center; background: #efefef; border-left: 1px solid #fff; padding: 3px 0; }
.thumb { width: 11px; height: 11px; margin: auto 0 147px; border: 1px solid #aaa; background: linear-gradient(90deg, #fff, #ccc); }
.tabs { display: flex; height: 12px; flex: none; align-items: center; background: #efefef; padding-left: 1px; color: #222; }
.nav { width: 10px; height: 12px; border-right: 1px solid #bbb; color: #555; }
.nav svg { width: 8px; height: 8px; }
.tab { width: 27px; height: 12px; }
.tab.on { width: 35px; background: #000; color: #fff; clip-path: polygon(0 0, 100% 0, 85% 100%, 15% 100%); }
.slash { width: 6px; height: 12px; }
.slash + .tab { width: 28px; }
.hscroll { flex: 0 1 35%; min-width: 0; margin-left: auto; display: flex; align-items: center; gap: 4px; }
.split { width: 4px; height: 10px; border: 1px solid #999; background: #fff; }

/* dynamic input beside the cursor */
.dynamic { position: absolute; left: 786px; top: 292px; display: flex; gap: 3px; color: #26264a; }
.tip { height: 16px; display: flex; align-items: center; background: #c9c9e4; border: 1px solid #7777a8; padding: 0 2px; }
.prompt { width: 95px; justify-content: space-between; }
.prompt svg { width: 9px; height: 9px; }
.tip input { width: 44px; height: 12px; }
.field { width: 53px; background: #fff; border-color: #fff; }
.tip .sel { background: #3399f3; color: #fff; }

/* command window */
.command { flex: none; height: 45px; display: flex; border-top: 2px solid #777; background: #cce8cf; font: 11px/11px "Liberation Mono", "Noto Sans CJK SC", monospace; color: #222; }
.handle { width: 8px; background: #a5a5a5; border-right: 1px solid #ddd; }
.log { flex: 1; min-width: 0; display: flex; flex-direction: column; padding-top: 1px; }
.log p { margin: 0; padding-left: 2px; height: 11px; }
.entry { display: flex; align-items: center; margin-top: auto; height: 14px; border-top: 1px solid #9fb8a2; padding-left: 2px; }
.entry input { flex: 1; }
.cscroll { width: 10px; background: #efefef; display: flex; flex-direction: column; align-items: center; justify-content: space-between; padding: 2px 0; }
.cscroll svg { width: 8px; height: 8px; }

/* status bar */
.status { flex: none; height: 14px; display: flex; align-items: center; overflow: hidden; background: linear-gradient(#6c6c6c, #8d8d8d); }
.coords { width: 156px; padding-left: 6px; font: 8px/12px "Liberation Mono", monospace; color: #9a9a9a; }
.toggles { display: flex; }
.toggles button { width: 16px; height: 14px; border-right: 1px solid #777; background: #c4c4c4; }
.toggles .on { background: linear-gradient(#d9f0fb, #9fd2ea); }
.status svg { width: 14px; height: 14px; }
.tray { margin-left: auto; display: flex; gap: 12px; }
.group { display: flex; background: #bdbdbd; color: #333; }
.group button { width: 16px; height: 14px; border-left: 1px solid #8c8c8c; }
.group .wide { width: 22px; color: #111; }
.group .scale { width: 37px; font-family: "Liberation Serif", serif; font-size: 10px; }
.group .ws { width: 29px; }
.group .dd { width: 8px; }
.status svg.arrow, .status .dd svg { width: 8px; height: 8px; color: #111; }
.group + .tight { margin-left: -8px; }

/* brand plate over the lower right corner */
.mark { position: absolute; right: 39px; bottom: 20px; width: 195px; height: 98px; display: flex; align-items: center; gap: 8px; padding-left: 6px; background: #223059; color: #e2e2e6; }
.mark > svg { width: 47px; height: 62px; }
.brand { display: flex; flex-direction: column; gap: 4px; white-space: nowrap; }
.big { display: flex; align-items: center; gap: 1px; font: 700 28px/30px "Noto Sans CJK SC", sans-serif; }
.lat { font: 500 36px/30px Roboto, sans-serif; }
.dom { font: 400 24px/24px Inter, sans-serif; }
```
